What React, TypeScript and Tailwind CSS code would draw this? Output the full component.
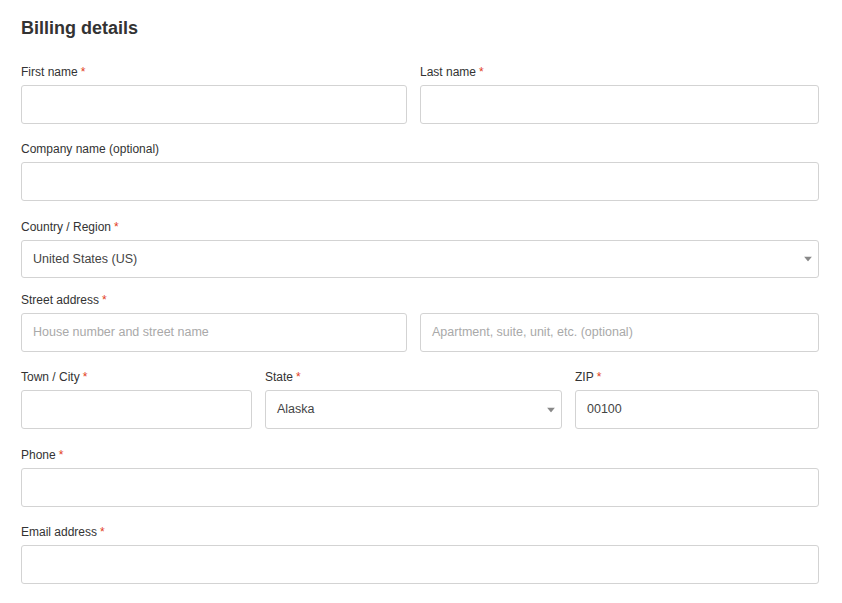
const Req = () => <span className="text-[#e2401c] ml-[3px]">*</span>;

const Label = ({ text, required = true }: { text: string; required?: boolean }) => (
  <label className="block text-[12px] leading-[20px] text-[#333] mb-[3px]">
    {text}
    {required && <Req />}
  </label>
);

const Box = ({
  value,
  placeholder,
  select,
  h = "h-[39px]",
}: {
  value?: string;
  placeholder?: string;
  select?: boolean;
  h?: string;
}) => (
  <div className={`relative ${h} w-full border border-[#d3d3d3] rounded-[3px] bg-white flex items-center px-[11px] text-[12.5px]`}>
    {value ? (
      <span className="text-[#444]">{value}</span>
    ) : placeholder ? (
      <span className="text-[#a9a9a9]">{placeholder}</span>
    ) : null}
    {select && (
      <svg className="absolute right-[6px] top-1/2 -translate-y-1/2" width="8" height="5" viewBox="0 0 8 5">
        <path d="M0 0 L8 0 L4 5 Z" fill="#888" />
      </svg>
    )}
  </div>
);

export default function App() {
  return (
    <div className="w-[842px] h-[603px] bg-white font-['Liberation_Sans',Arial,sans-serif] overflow-hidden">
      <div className="pl-[21px] pr-[23px] pt-[15px]">
        <h3 className="text-[18px] leading-[26px] font-bold text-[#333] mb-[21px]">Billing details</h3>

        <div className="flex gap-[13px]">
          <div className="w-[386px]">
            <Label text="First name" />
            <Box />
          </div>
          <div className="flex-1">
            <Label text="Last name" />
            <Box />
          </div>
        </div>

        <div className="mt-[15px]">
          <Label text="Company name (optional)" required={false} />
          <Box />
        </div>

        <div className="mt-[16px]">
          <Label text="Country / Region" />
          <Box value="United States (US)" select h="h-[38px]" />
        </div>

        <div className="flex gap-[13px] mt-[12px]">
          <div className="w-[386px]">
            <Label text="Street address" />
            <Box placeholder="House number and street name" />
          </div>
          <div className="flex-1">
            <div className="h-[23px]" />
            <Box placeholder="Apartment, suite, unit, etc. (optional)" />
          </div>
        </div>

        <div className="flex gap-[13px] mt-[15px]">
          <div className="w-[231px]">
            <Label text="Town / City" />
            <Box />
          </div>
          <div className="w-[297px]">
            <Label text="State" />
            <Box value="Alaska" select />
          </div>
          <div className="w-[244px]">
            <Label text="ZIP" />
            <Box value="00100" />
          </div>
        </div>

        <div className="mt-[16px]">
          <Label text="Phone" />
          <Box />
        </div>

        <div className="mt-[15px]">
          <Label text="Email address" />
          <Box />
        </div>
      </div>
    </div>
  );
}
